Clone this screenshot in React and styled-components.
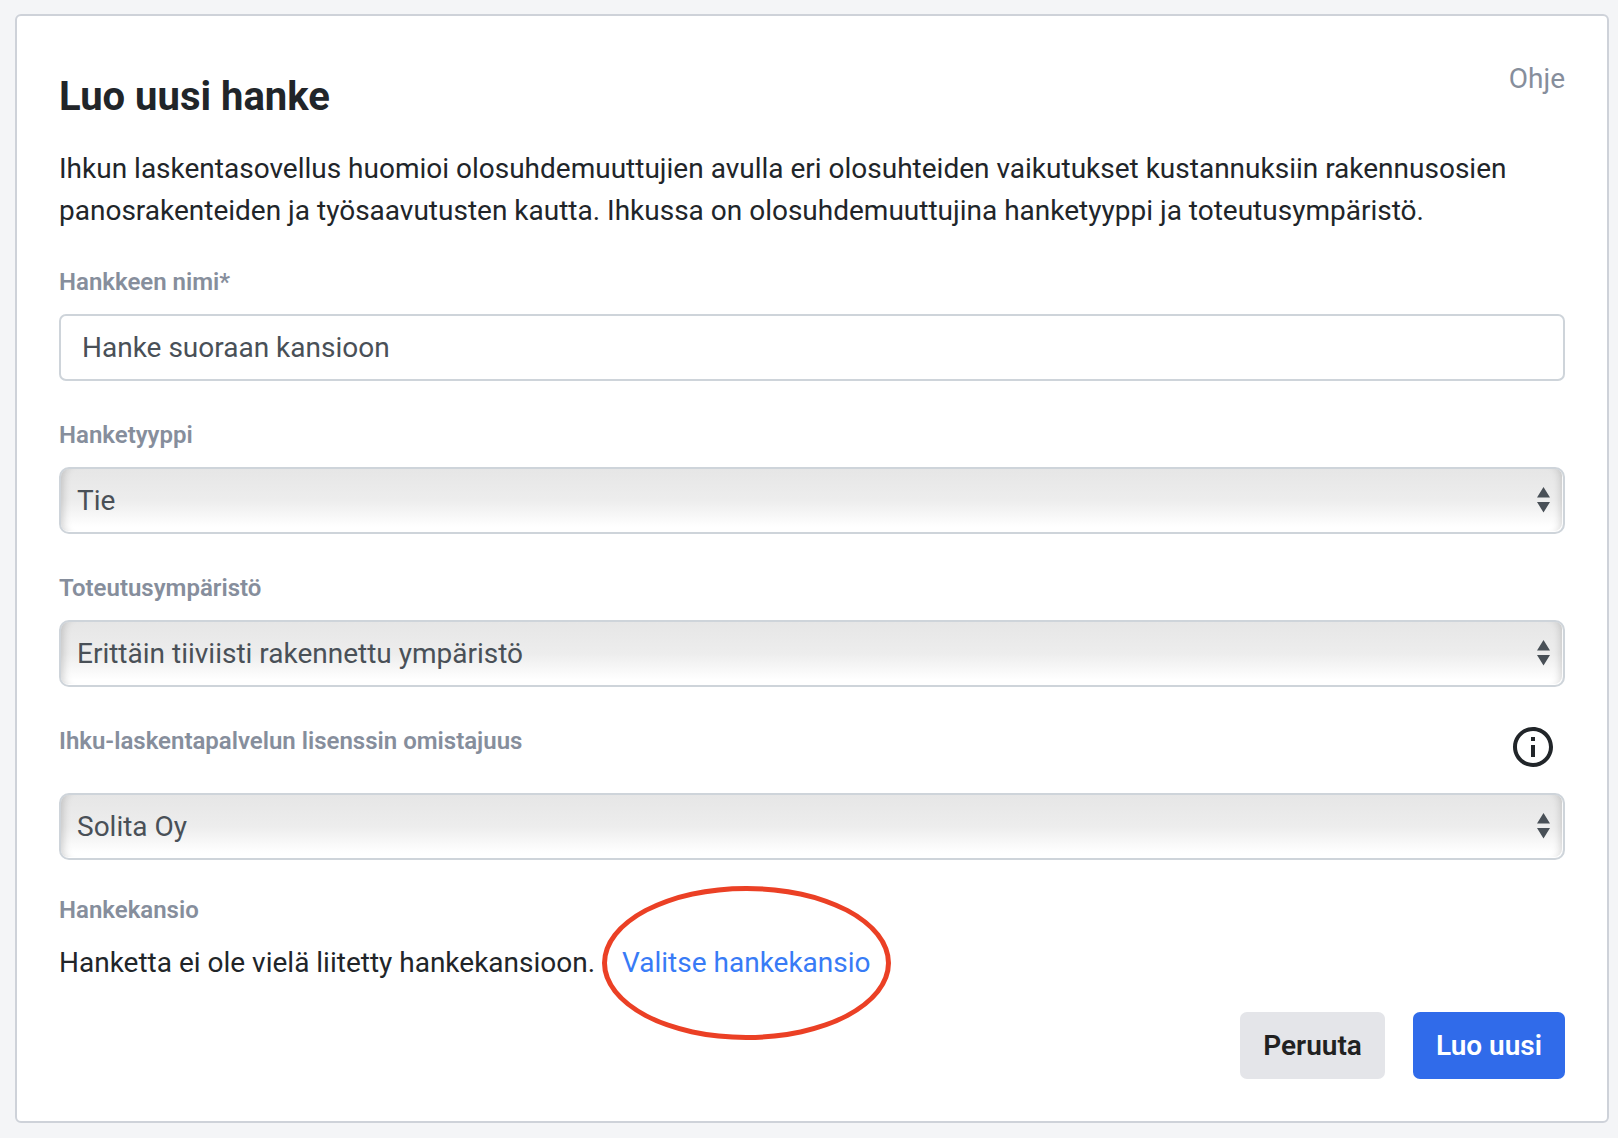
import { useState } from 'react';

import styled, { createGlobalStyle } from 'styled-components';

const GlobalStyle = createGlobalStyle`
  * {
    box-sizing: border-box;
  }

  body {
    margin: 0;
    background: #f4f5f7;
    color: #212529;
    font-family: Roboto, 'Liberation Sans', sans-serif;
    font-size: 28px;
    line-height: 42px;
  }
`;

const SelectField = ({ id, label, options, info }) => (
  <Field>
    <LabelRow>
      <Label htmlFor={id}>{label}</Label>
      {info && (
        <InfoButton type="button" aria-label="Lisätietoja">
          <svg width="48" height="48" viewBox="0 0 24 24" fill="currentColor">
            <path d="M11 7h2v2h-2zm0 4h2v6h-2zm1-9C6.48 2 2 6.48 2 12s4.48 10 10 10 10-4.48 10-10S17.52 2 12 2zm0 18c-4.41 0-8-3.59-8-8s3.59-8 8-8 8 3.59 8 8-3.59 8-8 8z" />
          </svg>
        </InfoButton>
      )}
    </LabelRow>
    <SelectBox>
      <Select id={id}>
        {options.map(option => (
          <option key={option}>{option}</option>
        ))}
      </Select>
      <Arrows width="13" height="26" viewBox="0 0 13 26" aria-hidden="true">
        <path d="M6.5 0L13 10.5H0zM6.5 25.5L0 15h13z" />
      </Arrows>
    </SelectBox>
  </Field>
);

const App = () => {
  const [name, setName] = useState('Hanke suoraan kansioon');
  return (
    <Page>
      <GlobalStyle />
      <Card onSubmit={e => e.preventDefault()}>
        <Header>
          <Title>Luo uusi hanke</Title>
          <HelpLink href="#ohje">Ohje</HelpLink>
        </Header>
        <Intro>
          Ihkun laskentasovellus huomioi olosuhdemuuttujien avulla eri
          olosuhteiden vaikutukset kustannuksiin rakennusosien
          panosrakenteiden ja työsaavutusten kautta. Ihkussa on
          olosuhdemuuttujina hanketyyppi ja toteutusympäristö.
        </Intro>
        <Fields>
          <Field>
            <Label htmlFor="nimi">Hankkeen nimi*</Label>
            <Input
              id="nimi"
              type="text"
              value={name}
              onChange={e => setName(e.target.value)}
            />
          </Field>
          <SelectField id="tyyppi" label="Hanketyyppi" options={['Tie']} />
          <SelectField
            id="ymparisto"
            label="Toteutusympäristö"
            options={['Erittäin tiiviisti rakennettu ympäristö']}
          />
          <SelectField
            id="lisenssi"
            label="Ihku-laskentapalvelun lisenssin omistajuus"
            options={['Solita Oy']}
            info
          />
        </Fields>
        <Folder>
          <FolderTitle>Hankekansio</FolderTitle>
          <FolderRow>
            <span>Hanketta ei ole vielä liitetty hankekansioon.</span>
            <FolderLink href="#hankekansio">Valitse hankekansio</FolderLink>
          </FolderRow>
        </Folder>
        <Footer>
          <Button type="button">Peruuta</Button>
          <Button type="submit" $primary>
            Luo uusi
          </Button>
        </Footer>
      </Card>
    </Page>
  );
};

const Page = styled.main`
  padding: 14px 9px 15px 15px;
`;

const Card = styled.form`
  padding: 42px;
  background: #fff;
  border: 2px solid #ced2d9;
  border-radius: 6px;
`;

const Header = styled.header`
  display: flex;
  justify-content: space-between;
  align-items: flex-start;
`;

const Title = styled.h1`
  margin: 15px 0 27px;
  font-size: 40px;
  font-weight: 700;
  line-height: 48px;
`;

const HelpLink = styled.a`
  color: #868e9c;
  text-decoration: none;
`;

const Intro = styled.p`
  margin: 0 0 32px;
`;

const Fields = styled.div`
  display: flex;
  flex-direction: column;
  gap: 36px;
`;

const Field = styled.div`
  display: flex;
  flex-direction: column;
  gap: 14px;
`;

const LabelRow = styled.div`
  display: flex;
  justify-content: space-between;
  align-items: flex-start;
`;

const Label = styled.label`
  color: #868e9c;
  font-size: 24px;
  font-weight: 600;
  line-height: 36px;
`;

const InfoButton = styled.button`
  display: flex;
  margin: 0 8px 8px 0;
  padding: 0;
  border: 0;
  background: none;
  color: #212529;
`;

const Input = styled.input`
  width: 100%;
  height: 67px;
  padding: 0 21px;
  border: 2px solid #ced4da;
  border-radius: 7px;
  background: #fff;
  color: #495057;
  font: inherit;
`;

const SelectBox = styled.div`
  position: relative;
  display: flex;
`;

const Select = styled.select`
  appearance: none;
  width: 100%;
  height: 67px;
  padding: 0 40px 0 16px;
  border: 2px solid #ced4da;
  border-radius: 10px;
  background: linear-gradient(#e6e6e6, #ededed 50%, #fff 92%);
  box-shadow:
    inset -1px -1px 0 rgba(255, 255, 255, 0.9),
    inset 10px 0 8px -8px rgba(0, 0, 0, 0.18),
    inset -10px 0 8px -8px rgba(0, 0, 0, 0.18);
  color: #495057;
  font: inherit;
`;

const Arrows = styled.svg`
  position: absolute;
  top: 20px;
  right: 15px;
  fill: #495057;
  pointer-events: none;
`;

const Folder = styled.section`
  margin: 32px 0 28px;
`;

const FolderTitle = styled.h2`
  margin: 0 0 14px;
  color: #868e9c;
  font-size: 24px;
  font-weight: 600;
  line-height: 36px;
`;

const FolderRow = styled.div`
  display: flex;
  flex-wrap: wrap;
  gap: 27px;
`;

const FolderLink = styled.a`
  position: relative;
  color: #387bf6;
  text-decoration: none;

  /* highlight ring round the link */
  &::after {
    content: '';
    position: absolute;
    inset: -56px -20px;
    border: 5px solid #eb4025;
    border-radius: 50%;
    pointer-events: none;
  }
`;

const Footer = styled.footer`
  display: flex;
  justify-content: flex-end;
  gap: 28px;
`;

const Button = styled.button`
  height: 67px;
  padding: 0 23px;
  border: 0;
  border-radius: 7px;
  background: ${({ $primary }) => ($primary ? '#306bea' : '#e4e5e9')};
  color: ${({ $primary }) => ($primary ? '#fff' : '#212121')};
  font: inherit;
  font-weight: 600;
`;

export default App;
